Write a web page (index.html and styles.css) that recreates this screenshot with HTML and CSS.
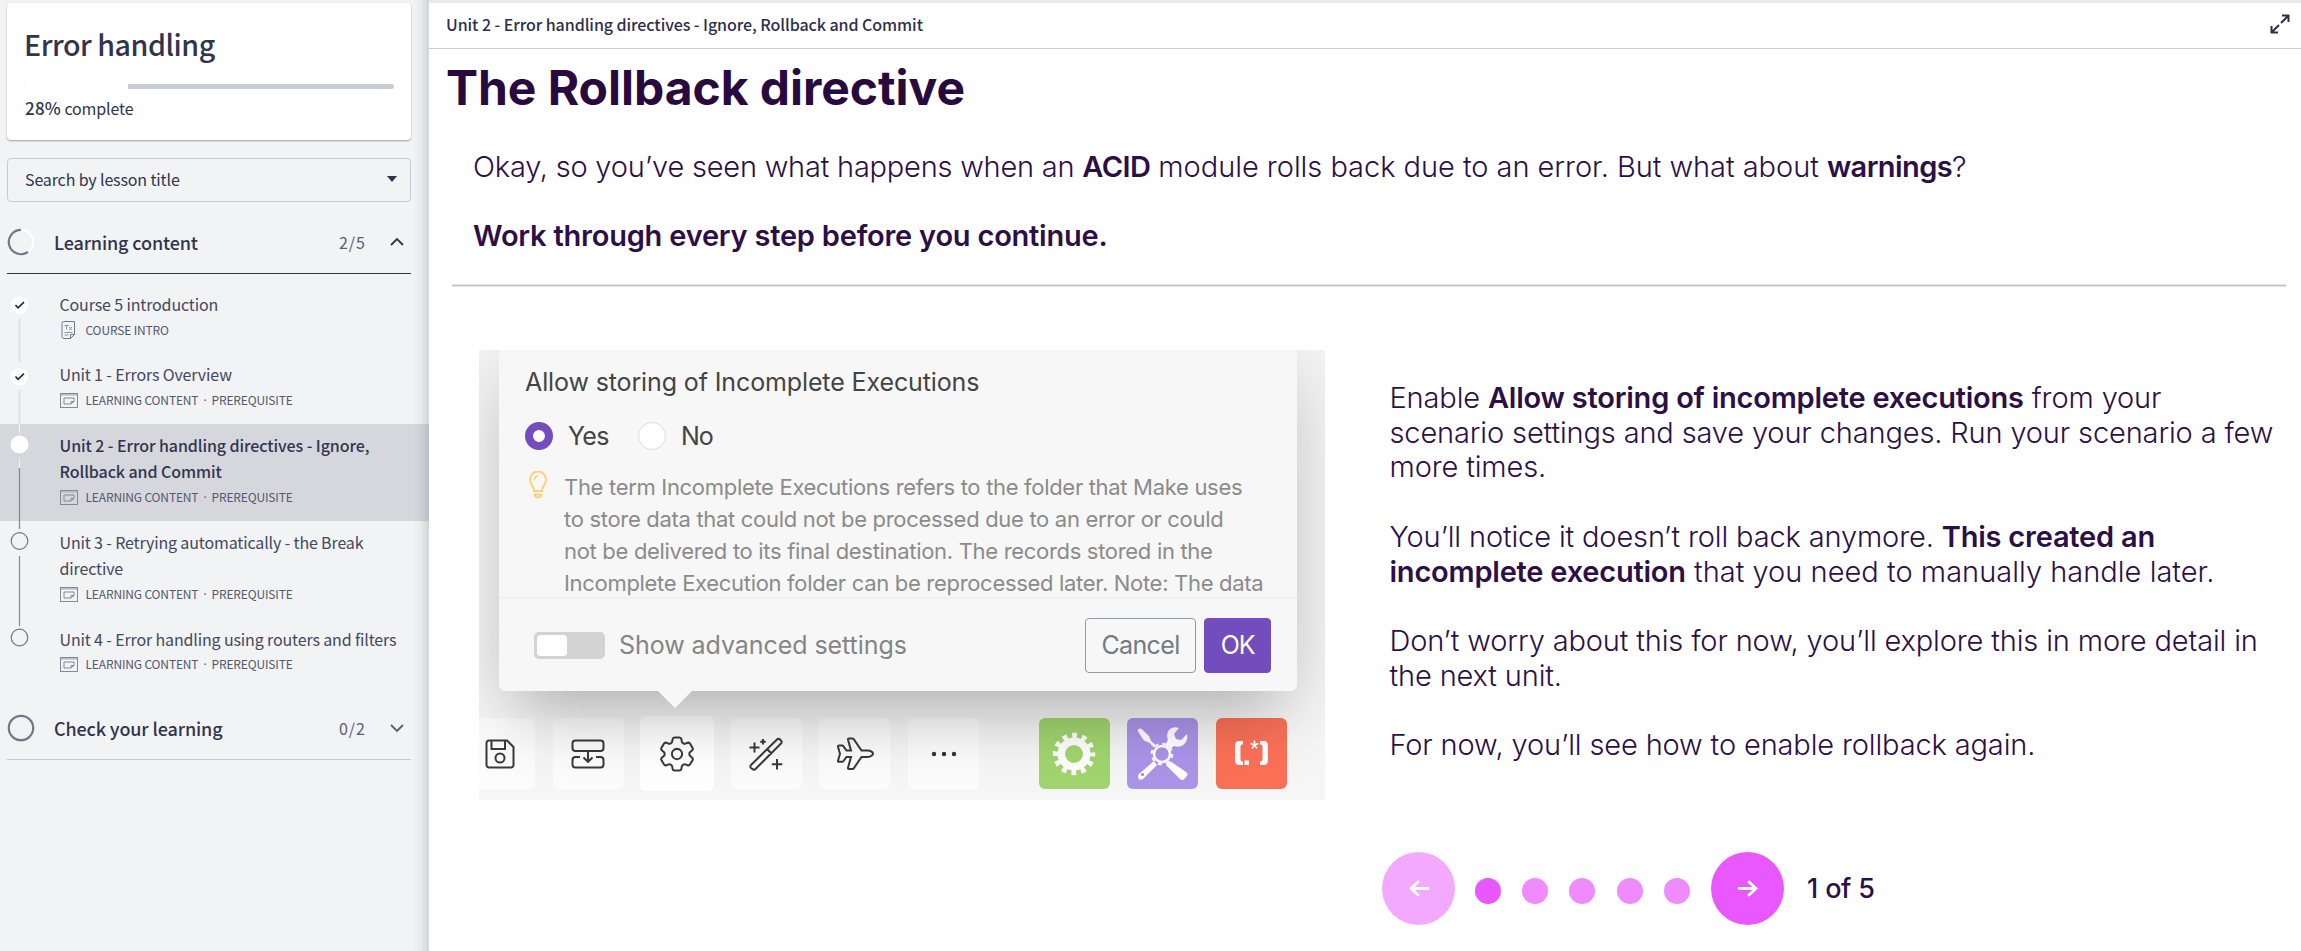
FILE: index.html
```html
<!DOCTYPE html>
<html lang="en">
<head>
<meta charset="utf-8">
<title>Error handling</title>
<link rel="stylesheet" href="styles.css">
</head>
<body>
<svg class="defs" width="0" height="0">
  <symbol id="slide" viewBox="0 0 18 15"><rect x=".5" y=".5" width="17" height="14" fill="none" stroke="#84879a"/><rect x="1" y="1" width="16" height="1.6" fill="#b9bbc6"/><path d="M4 5h10v3.5h-3V11H4zM11 11l3-2.5" fill="none" stroke="#84879a"/></symbol>
</svg>
<div class="app">
  <aside class="side">
    <section class="card">
      <h2 class="course">Error handling</h2>
      <div class="bar"><div class="bar-fill" style="width:28%"></div></div>
      <p class="pct"><b>28%</b> complete</p>
    </section>
    <div class="search"><span>Search by lesson title</span><svg width="10" height="6"><path d="M0 0h10L5 6z" fill="#32344f"/></svg></div>
    <div class="group open">
      <svg class="ring" width="28" height="28"><circle cx="14" cy="14" r="12.2" fill="none" stroke="#fff" stroke-width="2"/><path d="M14 1.8A12.2 12.2 0 1 0 21 24" fill="none" stroke="#74778a" stroke-width="2.2"/></svg>
      <span class="gname">Learning content</span><span class="count">2/5</span>
      <svg class="chev" width="16" height="10"><path d="M2 8l6-6 6 6" fill="none" stroke="#32344f" stroke-width="1.8"/></svg>
    </div>
    <ul class="list">
      <li class="item">
        <svg class="rail" width="26" height="71"><circle cx="12.5" cy="22" r="8.7" fill="#fff"/><path d="M8.5 22l2.5 2.8 6-5.6" fill="none" stroke="#222437" stroke-width="1.6"/><path d="M12.5 35v36" stroke="#dfe1e5" stroke-width="2"/></svg>
        <div><div class="name">Course 5 introduction</div>
        <div class="meta"><svg width="18" height="18"><path d="M4 .5h10.500v13l-4 4H4a2 2 0 0 1-2-2v-13a2 2 0 0 1 2-2zM14.500 13.500h-4v4" fill="none" stroke="#6f7b96"/><path d="M4.500 4.500h4M6.500 4.500v4M9 6l3 3M12 6L9 9M4.500 11.500h8M4.500 14h4" stroke="#7889ad" stroke-width=".9"/></svg><span>COURSE INTRO</span></div></div>
      </li>
      <li class="item">
        <svg class="rail" width="26" height="71"><path d="M12.500 0v8.500M12.500 36v35" stroke="#dfe1e5" stroke-width="2"/><circle cx="12.500" cy="22.500" r="8.700" fill="#fff"/><path d="M8.500 22.500l2.500 2.800 6-5.600" fill="none" stroke="#222437" stroke-width="1.600"/></svg>
        <div><div class="name">Unit 1 - Errors Overview</div>
        <div class="meta"><svg width="18" height="15"><use href="#slide"/></svg><span>LEARNING CONTENT<i class="sep">·</i>PREREQUISITE</span></div></div>
      </li>
      <li class="item current">
        <svg class="rail" width="26" height="97"><path d="M12.500 0v9M12.500 35v9" stroke="#f1f2f5"/><path d="M12.500 44v53" stroke="#84879a" stroke-width="1.200"/><circle cx="12.500" cy="20.500" r="9" fill="#fff"/></svg>
        <div><div class="name">Unit 2 - Error handling directives - Ignore,<br>Rollback and Commit</div>
        <div class="meta"><svg width="18" height="15"><use href="#slide"/></svg><span>LEARNING CONTENT<i class="sep">·</i>PREREQUISITE</span></div></div>
      </li>
      <li class="item">
        <svg class="rail" width="26" height="97"><path d="M12.500 0v8M12.500 35v62" stroke="#84879a" stroke-width="1.200"/><circle cx="12.500" cy="20" r="8.300" fill="none" stroke="#74778a" stroke-width="1.200"/></svg>
        <div><div class="name">Unit 3 - Retrying automatically - the Break<br>directive</div>
        <div class="meta"><svg width="18" height="15"><use href="#slide"/></svg><span>LEARNING CONTENT<i class="sep">·</i>PREREQUISITE</span></div></div>
      </li>
      <li class="item">
        <svg class="rail" width="26" height="70"><path d="M12.500 0v8" stroke="#84879a" stroke-width="1.200"/><circle cx="12.500" cy="19.500" r="8.300" fill="none" stroke="#74778a" stroke-width="1.200"/></svg>
        <div><div class="name">Unit 4 - Error handling using routers and filters</div>
        <div class="meta"><svg width="18" height="15"><use href="#slide"/></svg><span>LEARNING CONTENT<i class="sep">·</i>PREREQUISITE</span></div></div>
      </li>
    </ul>
    <div class="group last">
      <svg class="ring" width="28" height="28"><circle cx="14" cy="14" r="12.200" fill="none" stroke="#74778a" stroke-width="2.200"/></svg>
      <span class="gname">Check your learning</span><span class="count">0/2</span>
      <svg class="chev" width="16" height="10"><path d="M2 2l6 6 6-6" fill="none" stroke="#5a5d74" stroke-width="1.800"/></svg>
    </div>
  </aside>

  <main class="main">
    <header class="top"><span>Unit 2 - Error handling directives - Ignore, Rollback and Commit</span>
      <svg width="20" height="20"><path d="M11 9l7-7M12 1.500h6.500V8M9 11l-7 7M1.500 12v6.500H8" fill="none" stroke="#2d2f4a" stroke-width="2"/></svg>
    </header>
    <h1 class="title">The Rollback directive</h1>
    <div class="intro">
      <p><span class="lead">Okay, so you’ve seen what happens when an </span><b class="kw">ACID</b> module rolls back due to an error. But what about <b class="kw">warnings</b>?</p>
      <p><b>Work through every step before you continue.</b></p>
    </div>
    <hr class="rule">
    <div class="cols">
      <figure class="shot">
        <div class="dialog">
          <div class="set">
            <div class="q">Allow storing of Incomplete Executions</div>
            <div class="radios"><i class="radio on"></i><span class="yes">Yes</span><i class="radio"></i><span class="no">No</span></div>
            <div class="hint">
              <svg width="22" height="28" fill="none" stroke="#fbd07a" stroke-width="2"><path d="M7 20c0-5-4-6-4-11.500a8 8 0 0 1 16 0C19 14 15 15 15 20z"/><path d="M7 9.500A5 5 0 0 1 11.500 5" stroke-width="1.500"/><path d="M7.500 23.500h7a3.500 3 0 0 1-7 0z"/></svg>
              <div>The term Incomplete Executions refers to the folder that Make uses<br>to store data that could not be processed due to an error or could<br>not be delivered to its final destination. The records stored in the<br>Incomplete Execution folder can be reprocessed later. Note: The data</div>
            </div>
          </div>
          <div class="foot">
            <i class="toggle"></i><span class="adv">Show advanced settings</span>
            <span class="btn">Cancel</span><span class="btn ok">OK</span>
          </div>
          <i class="tip"></i>
        </div>
        <div class="tools">
          <span class="tool first"><svg width="30" height="30" class="ln"><path d="M4 1.500h18L28.500 8v18a2.500 2.500 0 0 1-2.500 2.500H4A2.500 2.500 0 0 1 1.500 26V4A2.500 2.500 0 0 1 4 1.500zM6.500 1.500V10H20V1.500"/><circle cx="15" cy="19" r="4.500"/></svg></span>
          <span class="tool"><svg width="34" height="30" class="ln"><rect x="1.500" y="1.500" width="31" height="10.500" rx="3"/><path d="M9 18H4.500a3 3 0 0 0-3 3v4.500a3 3 0 0 0 3 3h25a3 3 0 0 0 3-3V21a3 3 0 0 0-3-3H25M17 12v10.500M12.500 18.500l4.500 4.300 4.500-4.300"/></svg></span>
          <span class="tool big"><svg width="44" height="44" viewBox="0 0 24 24" fill="none" stroke="#3a3a3a" stroke-width="1.100"><path d="M9.594 3.940c.09-.542.56-.94 1.110-.94h2.593c.55 0 1.020.398 1.110.94l.213 1.281c.063.374.313.686.645.87.074.04.147.083.22.127.325.196.72.257 1.075.124l1.217-.456a1.125 1.125 0 0 1 1.370.49l1.296 2.247a1.125 1.125 0 0 1-.26 1.431l-1.003.827c-.293.241-.438.613-.43.992a7.723 7.723 0 0 1 0 .255c-.008.378.137.75.43.991l1.004.827c.424.35.534.955.26 1.430l-1.298 2.247a1.125 1.125 0 0 1-1.369.491l-1.217-.456c-.355-.133-.75-.072-1.076.124a6.470 6.470 0 0 1-.22.128c-.331.183-.581.495-.644.869l-.213 1.281c-.09.543-.56.94-1.110.94h-2.594c-.55 0-1.019-.398-1.110-.94l-.213-1.281c-.062-.374-.312-.686-.644-.87a6.520 6.520 0 0 1-.22-.127c-.325-.196-.72-.257-1.076-.124l-1.217.456a1.125 1.125 0 0 1-1.369-.49l-1.297-2.247a1.125 1.125 0 0 1 .26-1.431l1.004-.827c.292-.24.437-.613.43-.991a6.932 6.932 0 0 1 0-.255c.007-.38-.138-.751-.43-.992l-1.004-.827a1.125 1.125 0 0 1-.26-1.430l1.297-2.247a1.125 1.125 0 0 1 1.370-.491l1.216.456c.356.133.751.072 1.076-.124.072-.044.146-.086.22-.128.332-.183.582-.495.644-.869l.214-1.280Z"/><circle cx="12" cy="12" r="2.800"/></svg></span>
          <span class="tool"><svg width="34" height="34" class="ln"><path d="M2 28L28 2.500a2 2 0 0 1 3 0l1 1a2 2 0 0 1 0 3L6.500 32a2 2 0 0 1-3 0L2 31a2 2 0 0 1 0-3zM18 12l4.500 4.500M5.500 5.500v10M.5 10.500h10M14 2v5.500M11.200 4.700h5.600M28 22v10.500M22.800 27.200h10.500"/></svg></span>
          <span class="tool"><svg width="38" height="34" class="ln"><path d="M13 1.500h3.500q1 0 1.500 1l7.500 11h6c3.500 0 5.500 2 5.500 3.200s-2 3.300-5.500 3.300h-6L18 31q-.5 1-1.500 1H13q-1.300 0-1-1.200L15 20h-4.500l-3 4q-.5.800-1.300.8H3q-1.200 0-1-1.200l2-6.900-2-6.900q-.2-1.200 1-1.200h3.200q.8 0 1.300.8l3 4.100H15L12 2.700q-.3-1.200 1-1.200z"/></svg></span>
          <span class="tool"><svg width="26" height="6" fill="#333"><circle cx="3" cy="3" r="2.200"/><circle cx="13" cy="3" r="2.200"/><circle cx="23" cy="3" r="2.200"/></svg></span>
          <span class="tool green"><svg width="44" height="44" viewBox="-22 -22 44 44"><circle r="12.700" fill="none" stroke="#fff" stroke-width="7.500"/><circle r="18.500" fill="none" stroke="#fff" stroke-width="5.500" stroke-dasharray="4.843 4.843" stroke-dashoffset="2.420"/></svg></span>
          <span class="tool purple"><svg width="52" height="54" viewBox="0 0 52 54"><circle cx="25" cy="27" r="8" fill="none" stroke="#fff" stroke-width="2.600"/><circle cx="25" cy="27" r="10.300" fill="none" stroke="#fff" stroke-width="2" stroke-dasharray="4.050 4.050"/><path d="M1 2l3-.5 8 7.500 2 5 5 4.500-2 2-5-5-5-2-6-9zM17 34l3 4L7 51c-4 4-8 0-5-4zM33 34l-4 4 14 14c2 2 4 1 5-1l2-2c1-2 0-3-1-4zM42 1c-9-3-14 5-11 12l-3 5 5 4 4-3c8 3 15-4 13-12l-6 6-5-1-2-5z" fill="#fff"/><circle cx="5.500" cy="47.500" r="1.600" fill="#9d86d3"/></svg></span>
          <span class="tool red"><svg width="36" height="28" fill="#fff"><path d="M9 1H5Q1 1 1 6v14q0 5 4 5h4v-3.500H8Q6.500 21.500 6.500 19V7q0-2.500 1.500-2.500h1zM26 1h4q4 0 4 5v14q0 5-4 5h-4v-3.500h1q1.500 0 1.500-2.500V7q0-2.500-1.500-2.500h-1zM10.500 20.500H15V25h-4.500z"/><path d="M20.500.5V5M16.500 3.500l4 1.500 4-1.500M18 8.500l2.500-3.500L23 8.500" fill="none" stroke="#fff" stroke-width="1.700"/></svg></span>
        </div>
      </figure>
      <div class="right">
        <div class="copy">
          <p>Enable <b>Allow storing of incomplete executions</b> from your<br>scenario settings and save your changes. Run your scenario a few<br>more times.</p>
          <p>You’ll notice it doesn’t roll back anymore. <b>This created an</b><br><b>incomplete execution</b><span class="loose"> that you need to manually handle later.</span></p>
          <p>Don’t worry about this for now, you’ll explore this in more detail in<br>the next unit.</p>
          <p>For now, you’ll see how to enable rollback again.</p>
        </div>
        <nav class="pager">
          <span class="go prev"><svg width="22" height="18"><path d="M20 8.500H3M10 2L3 8.500 10 15" fill="none" stroke="#fff" stroke-width="2.800" stroke-linecap="round"/></svg></span>
          <i class="dot on"></i><i class="dot"></i><i class="dot"></i><i class="dot"></i><i class="dot"></i>
          <span class="go"><svg width="22" height="18"><path d="M2 8.500h17M12 2l7 6.500-7 6.500" fill="none" stroke="#fff" stroke-width="2.800" stroke-linecap="round"/></svg></span>
          <span class="of">1 of 5</span>
        </nav>
      </div>
    </div>
  </main>
</div>
</body>
</html>
```

FILE: styles.css
```css
* { box-sizing: border-box; }
body { margin: 0; background: #fff; overflow: hidden; }
p, h1, h2, ul, figure { margin: 0; padding: 0; }
i { display: block; }
svg { flex: none; display: block; }
.defs { position: absolute; }
.app { display: flex; width: 2301px; height: 951px; background: #e9eaec; }

.side { width: 429px; flex: none; padding-top: 3px; color: #32344f; font-family: "Noto Sans CJK SC", sans-serif; letter-spacing: -.14px; background: linear-gradient(90deg, transparent 413px, rgba(0,0,0,.04) 421px, rgba(0,0,0,.13) 429px), #f1f3f5; }
.card { margin: 0 18px 0 7px; height: 137px; border-radius: 4px; background: #fff; box-shadow: 0 1px 2px rgba(0,0,0,.35); padding: 21px 17px 0; }
.course { font-size: 28.600px; line-height: 40px; font-weight: 500; letter-spacing: -.45px; }
.bar { height: 5px; margin-top: 20px; border-radius: 3px; background: #c9ccd6; overflow: hidden; }
.bar-fill { height: 5px; background: #fff; }
.pct { font-size: 16px; line-height: 26px; margin-top: 6px; padding-left: 1px; }
.pct b { font-weight: 500; font-size: 17px; letter-spacing: .2px; }
.search { margin: 18px 18px 0 7px; height: 44px; border: 1px solid #c6c9d5; border-radius: 4px; display: flex; align-items: center; justify-content: space-between; padding: 0 13px 3px 17px; font-size: 16px; line-height: 26px; }
.group { margin: 0 18px 0 7px; height: 72px; border-bottom: 1px solid #c6c9d0; display: flex; align-items: center; padding-top: 8px; }
.group.open { border-color: #32344f; }
.group.last { height: 71px; }
.gname { margin-left: 19px; flex: 1; font-size: 18px; line-height: 28px; font-weight: 500; }
.count { font-size: 16px; letter-spacing: 1px; margin-right: 23px; color: #5a5d74; }
.chev { margin-right: 6px; }
.list { list-style: none; padding-top: 9px; }
.item { display: flex; padding-left: 7px; height: 70.500px; }
.item > div { padding-top: 7.500px; margin-left: 26.500px; }
.name { font-size: 16px; line-height: 26.500px; color: #45475f; white-space: nowrap; }
.current { background: rgba(50,52,79,.14); height: 97px; }
.current + .item { height: 97px; }
.current .name { font-weight: 500; color: #32344f; letter-spacing: -.09px; }
.meta { display: flex; align-items: center; gap: 8px; height: 24px; margin-top: .5px; font-size: 12px; line-height: 24px; color: #55586e; white-space: nowrap; letter-spacing: -.15px; }
.sep { display: inline; font-family: "Noto Sans", sans-serif; font-style: normal; margin: 0 5px; }

.main { flex: 1; margin-top: 3px; background: #fff; color: #2c0f47; font-family: Inter, sans-serif; }
.top { height: 46px; border-bottom: 1px solid #c8ccd8; display: flex; align-items: center; justify-content: space-between; padding: 0 11px 3px 17px; font: 500 16px/26px "Noto Sans CJK SC", sans-serif; letter-spacing: -.07px; color: #2d2f4a; }
.title { margin: 10px 0 0 17px; font-size: 48px; line-height: 58px; font-weight: 700; letter-spacing: -.04px; color: #280a3e; white-space: nowrap; }
.intro { padding: 30px 0 0 44px; font-size: 29px; line-height: 40px; font-weight: 300; letter-spacing: -.04px; white-space: nowrap; }
.lead { letter-spacing: -.22px; }
.intro p + p { margin-top: 29px; letter-spacing: -.22px; }
.intro .kw { letter-spacing: -.6px; }
b { font-weight: 600; }
.rule { height: 3px; border: 1px solid #ebe6e6; border-width: 1px 0; background: #c6bcbc; margin: 28px 15px 0 23px; }
.cols { display: flex; }
.shot { width: 846px; height: 450px; margin: 63px 0 0 50px; background: #f6f6f6; overflow: hidden; color: #444; font-size: 25px; letter-spacing: -.12px; }
.dialog { position: relative; z-index: 1; width: 798px; height: 341px; margin-left: 20px; background: #f7f7f7; border-radius: 0 0 6px 6px; box-shadow: 0 20px 80px rgba(0,0,0,.2), 0 50px 50px -30px rgba(0,0,0,.11); }
.set { height: 249px; padding: 16px 0 0 26px; border-bottom: 2px solid #f0f0f0; }
.q { line-height: 32px; }
.radios { display: flex; align-items: center; margin-top: 22px; height: 32px; }
.radio { width: 28px; height: 28px; border-radius: 50%; background: #fff; border: 1px solid #ddd; margin-right: 15px; }
.radio.on { border: 8.500px solid #734dbd; }
.yes { width: 70px; letter-spacing: -.7px; }
.no { letter-spacing: -1px; }
.hint { display: flex; gap: 15px; margin-top: 19px; padding-left: 2px; font-size: 22px; line-height: 32px; letter-spacing: -.31px; color: #8b8b8b; white-space: nowrap; }
.foot { display: flex; align-items: center; height: 92px; padding: 0 26px 0 35px; color: #858585; }
.toggle { width: 71px; height: 27px; border-radius: 5px; background: #d3d3d3; padding: 3px; }
.toggle::before { content: ""; display: block; width: 30px; height: 21px; border-radius: 4px; background: #fff; }
.adv { margin-left: 14px; flex: 1; letter-spacing: -.06px; }
.btn { height: 55px; width: 111px; border: 1.500px solid #9299a0; border-radius: 4px; display: flex; align-items: center; justify-content: center; color: #727b82; letter-spacing: -.65px; }
.btn.ok { width: 67px; margin-left: 8px; background: #734dbd; border-color: #734dbd; color: #fff; letter-spacing: -1.200px; }
.tip { position: absolute; left: 159px; top: 341px; border: 17px solid transparent; border-top-color: #f7f7f7; border-bottom: 0; }
.tools { display: flex; align-items: center; gap: 17.850px; height: 109px; padding-top: 16px; }
.tool { width: 71px; height: 71px; flex: none; border-radius: 6px; background: rgba(255,255,255,.65); display: flex; align-items: center; justify-content: center; }
.first { width: 56px; border-radius: 0 6px 6px 0; padding-right: 14px; }
.big { width: 74px; height: 75px; margin: 0 -1.500px; background: #fff; }
.green { background: #a2d56f; margin-left: 41.500px; }
.purple { background: #ac94e9; }
.red { background: #fb7158; }
.ln { fill: none; stroke: #3a3a3a; stroke-width: 2; }

.right { margin-left: 57px; }
.copy { padding-top: 94px; margin-left: 7.500px; font-size: 29px; line-height: 34.700px; font-weight: 300; letter-spacing: -.14px; white-space: nowrap; }
.copy b { letter-spacing: -.22px; }
.loose { letter-spacing: .02px; }
.copy p + p { margin-top: 34.700px; }
.pager { display: flex; align-items: center; margin-top: 89.500px; }
.go { width: 73px; height: 73px; border-radius: 50%; background: #e957ff; display: flex; align-items: center; justify-content: center; }
.prev { background: #f3a9ff; }
.dot { width: 26px; height: 26px; border-radius: 50%; background: #ef8bff; margin: 4px 0 0 21.400px; }
.dot.on { background: #e957ff; margin-left: 19.500px; }
.dot + .go { margin-left: 21px; }
.of { margin: 0 0 1px 23px; font-size: 27px; font-weight: 500; letter-spacing: -.6px; word-spacing: 1px; }
```
